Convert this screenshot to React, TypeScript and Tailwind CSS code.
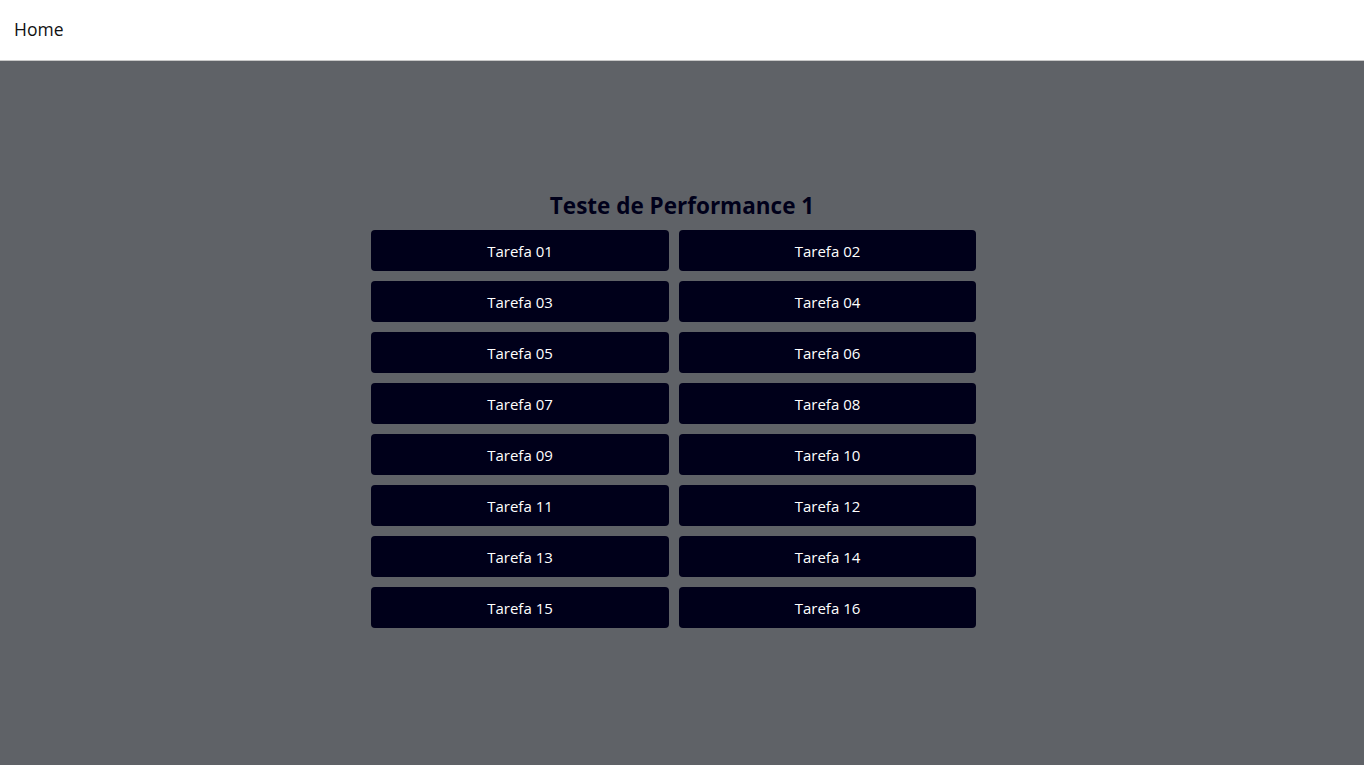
import React from 'react';

const tarefas = Array.from({ length: 16 }, (_, i) => `Tarefa ${String(i + 1).padStart(2, '0')}`);

const App: React.FC = () => {
  return (
    <div className="min-h-screen flex flex-col bg-[#5f6267] font-['Open_Sans',sans-serif]">
      {/* Header */}
      <header className="h-[61px] bg-white border-b border-[#c8c8c8] flex items-center px-[14px] pb-[2px]">
        <span className="text-[17.5px] font-medium text-[#111]">Home</span>
      </header>

      {/* Content */}
      <main className="h-[704px] flex items-center justify-center">
        <div className="w-[622px] flex flex-col items-center pb-[7px]">
          <h1 className="mt-[1px] text-[22.5px] leading-[28px] font-bold text-[#00001a] mb-[10px]">Teste de Performance 1</h1>
          <div className="self-start grid grid-cols-[298px_297px] gap-[10px]">
            {tarefas.map((t) => (
              <button
                key={t}
                className="h-[41px] pt-[2px] rounded-[4px] bg-[#00001a] text-white text-[15px] flex items-center justify-center"
              >
                {t}
              </button>
            ))}
          </div>
        </div>
      </main>
    </div>
  );
};

export default App;
